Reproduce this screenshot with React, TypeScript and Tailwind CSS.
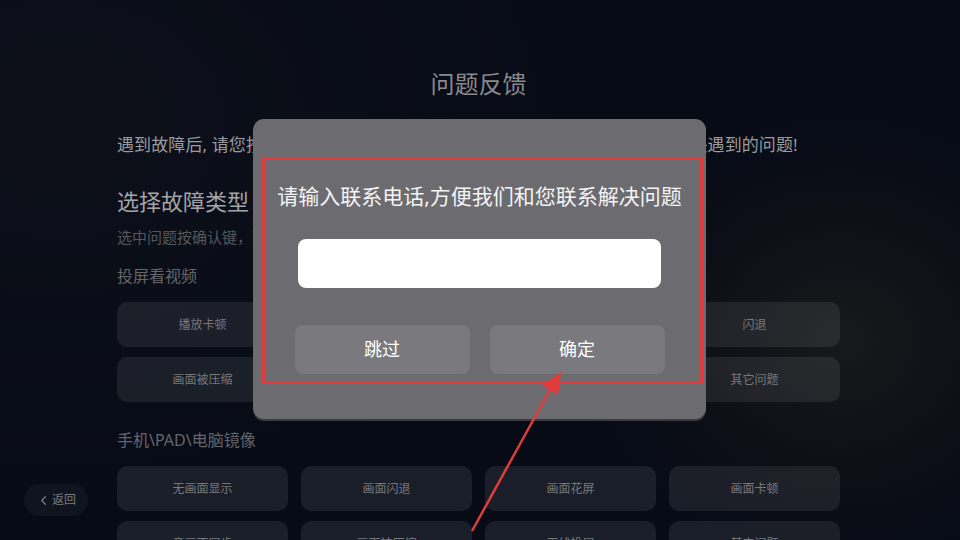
import { ChevronLeft } from 'lucide-react'

const castIssues = ['播放卡顿', '无法连接', '没有声音', '闪退', '画面被压缩', '画面不全', '声音延迟', '其它问题']
const mirrorIssues = ['无画面显示', '画面闪退', '画面花屏', '画面卡顿', '音画不同步', '画面被压缩', '无线投屏', '其它问题']

function IssueGrid({ items }: { items: string[] }) {
  return (
    <div className="grid grid-cols-4 gap-x-[13px] gap-y-[10px]">
      {items.map((label, i) => (
        <div
          key={i}
          className="flex h-[45px] items-center justify-center rounded-[10px] bg-white/[0.08] text-[12px] text-[#77787c]"
        >
          {label}
        </div>
      ))}
    </div>
  )
}

function ContactDialog() {
  return (
    <div className="absolute left-[253px] top-[119px] flex h-[300px] w-[453px] flex-col items-center rounded-[11px] bg-[#6c6b70] shadow-[0_2px_0_#3a3a40]">
      <p className="mt-[62px] text-[21px] leading-[30px] text-[#f4f4f4]">请输入联系电话,方便我们和您联系解决问题</p>
      <div className="mt-[28px] h-[49px] w-[363px] rounded-[8px] bg-white" />
      <div className="mt-[37px] flex gap-[20px]">
        <button className="h-[49px] w-[175px] rounded-[8px] bg-[#7a797e] text-[18px] text-white">跳过</button>
        <button className="h-[49px] w-[175px] rounded-[8px] bg-[#7a797e] text-[18px] text-white">确定</button>
      </div>
    </div>
  )
}

function Annotation() {
  return (
    <>
      <div className="absolute left-[262px] top-[157px] h-[227px] w-[441px] border-[3px] border-[#e23b3e]" />
      <svg className="absolute left-0 top-0" width="960" height="540" viewBox="0 0 960 540">
        <line x1="472" y1="531" x2="552" y2="386" stroke="#e23b3e" strokeWidth="2.5" />
        <polygon points="561,372 542,385 558,395" fill="#e23b3e" />
      </svg>
    </>
  )
}

export default function App() {
  return (
    <div
      className="relative h-[540px] w-[960px] overflow-hidden bg-[#070b16] bg-[radial-gradient(ellipse_260px_230px_at_840px_340px,#18191c_0%,#0c0f16_60%,transparent_100%),radial-gradient(ellipse_520px_380px_at_60px_120px,#0d1019_0%,transparent_100%)]"
      style={{ fontFamily: '"Noto Sans", "Noto Sans CJK SC", sans-serif' }}
    >
      <div className="flex flex-col pl-[117px] pr-[120px] pt-[66px]">
        <h1 className="text-center text-[24px] leading-[36px] text-[#88898d]">问题反馈</h1>
        <p className="mt-[31px] whitespace-nowrap text-[17px] leading-[24px] tracking-[0.1px] text-[#9a9b9f]">
          遇到故障后, 请您按照提示选择对应故障类型并提交反馈，我们会尽快为您解决遇到的问题!
        </p>
        <h2 className="mt-[29px] text-[22px] leading-[30px] text-[#a3a4a8]">选择故障类型</h2>
        <p className="mt-[11px] text-[15px] leading-[20px] text-[#55575c]">选中问题按确认键，可多选后提交反馈</p>
        <h3 className="mt-[17px] text-[16px] leading-[24px] text-[#64666b]">投屏看视频</h3>
        <div className="mt-[14px]">
          <IssueGrid items={castIssues} />
        </div>
        <h3 className="mt-[26px] text-[16px] leading-[24px] text-[#64666b]">手机\PAD\电脑镜像</h3>
        <div className="mt-[14px]">
          <IssueGrid items={mirrorIssues} />
        </div>
      </div>

      <div className="absolute left-[24px] top-[484px] flex h-[32px] w-[64px] items-center justify-center gap-[1px] rounded-full bg-white/[0.035] text-[12px] text-[#7b7c80]">
        <ChevronLeft size={15} strokeWidth={2} />
        <span>返回</span>
      </div>

      <ContactDialog />
      <Annotation />
    </div>
  )
}
